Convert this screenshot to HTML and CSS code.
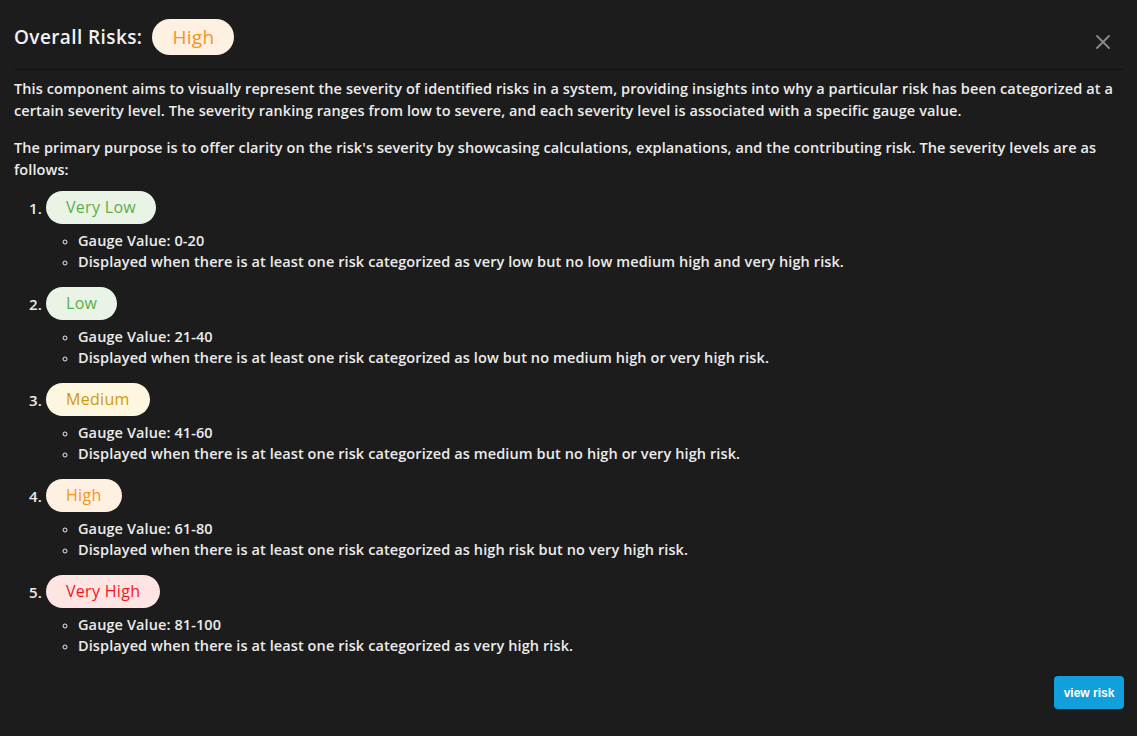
FILE: index.html
```html
<!DOCTYPE html>
<html lang="en">
<head>
<meta charset="utf-8">
<title>Overall Risks</title>
<link rel="stylesheet" href="styles.css">
</head>
<body>
<div class="modal">
  <header class="modal-header">
    <h2 class="title">Overall Risks:</h2>
    <span class="pill pill-lg high">High</span>
    <button class="close" aria-label="Close">
      <svg width="14" height="14" viewBox="0 0 14 14"><path d="M1 1L13 13M13 1L1 13" stroke="#8a8a8a" stroke-width="1.8" stroke-linecap="round"/></svg>
    </button>
  </header>
  <div class="modal-body">
    <p>This component aims to visually represent the severity of identified risks in a system, providing insights into why a particular risk has been categorized at a certain severity level. The severity ranking ranges from low to severe, and each severity level is associated with a specific gauge value.</p>
    <p>The primary purpose is to offer clarity on the risk's severity by showcasing calculations, explanations, and the contributing risk. The severity levels are as follows:</p>
    <ol class="levels">
      <li class="level">
        <div class="level-head"><span class="num">1.</span><span class="pill very-low">Very Low</span></div>
        <ul class="details">
          <li>Gauge Value: 0-20</li>
          <li>Displayed when there is at least one risk categorized as very low but no low medium high and very high risk.</li>
        </ul>
      </li>
      <li class="level">
        <div class="level-head"><span class="num">2.</span><span class="pill low">Low</span></div>
        <ul class="details">
          <li>Gauge Value: 21-40</li>
          <li>Displayed when there is at least one risk categorized as low but no medium high or very high risk.</li>
        </ul>
      </li>
      <li class="level">
        <div class="level-head"><span class="num">3.</span><span class="pill medium">Medium</span></div>
        <ul class="details">
          <li>Gauge Value: 41-60</li>
          <li>Displayed when there is at least one risk categorized as medium but no high or very high risk.</li>
        </ul>
      </li>
      <li class="level">
        <div class="level-head"><span class="num">4.</span><span class="pill high">High</span></div>
        <ul class="details">
          <li>Gauge Value: 61-80</li>
          <li>Displayed when there is at least one risk categorized as high risk but no very high risk.</li>
        </ul>
      </li>
      <li class="level">
        <div class="level-head"><span class="num">5.</span><span class="pill very-high">Very High</span></div>
        <ul class="details">
          <li>Gauge Value: 81-100</li>
          <li>Displayed when there is at least one risk categorized as very high risk.</li>
        </ul>
      </li>
    </ol>
    <div class="actions">
      <button class="btn-primary">view risk</button>
    </div>
  </div>
</div>
</body>
</html>
```

FILE: styles.css
```css
* { box-sizing: border-box; }
html, body {
  margin: 0;
  padding: 0;
  background: #1c1c1c;
}
body {
  font-family: "Open Sans", "Liberation Sans", sans-serif;
  color: #ececec;
  width: 1137px;
  height: 736px;
  overflow: hidden;
}
.modal {
  display: flex;
  flex-direction: column;
  height: 736px;
}
.modal-header {
  display: flex;
  align-items: center;
  margin: 0 14px;
  padding: 19px 0 14px;
  border-bottom: 1px solid #111111;
}
.title {
  margin: 0 10px 0 0;
  font-size: 19px;
  font-weight: 600;
  letter-spacing: 0.4px;
  color: #f2f2f2;
}
.close {
  margin-left: auto;
  margin-right: 13px;
  margin-top: 9px;
  background: none;
  border: 0;
  padding: 0;
  width: 14px;
  height: 14px;
  display: flex;
  cursor: pointer;
}
.modal-body {
  flex: 1;
  display: flex;
  flex-direction: column;
  padding: 8px 13px 27px 14px;
  font-size: 14.5px;
  font-weight: 600;
  letter-spacing: 0.1px;
  line-height: 22px;
}
.modal-body p {
  margin: 0 0 15px;
}
.levels {
  list-style: none;
  margin: -5px 0 0;
  padding: 0;
  display: flex;
  flex-direction: column;
  gap: 15px;
}
.level-head {
  display: flex;
  align-items: center;
  gap: 4px;
}
.num {
  width: 28px;
  text-align: right;
  font-size: 15px;
}
.pill {
  display: inline-block;
  padding: 6px 20px;
  border-radius: 999px;
  font-size: 16px;
  font-weight: 400;
  letter-spacing: 0.3px;
  line-height: 21px;
}
.pill-lg {
  padding: 6px 20px;
  font-size: 19px;
  line-height: 24px;
}
.very-low, .low { background: #eaf4e6; color: #5aae4c; }
.medium { background: #fdf7df; color: #d09a0a; }
.high { background: #fef1e2; color: #f7931e; }
.very-high { background: #ffe4e4; color: #f5151b; }
.details {
  margin: 6px 0 0;
  padding-left: 64px;
  list-style: circle;
  line-height: 21px;
}
.details li::marker { font-size: 12px; }
.actions {
  margin-top: auto;
  display: flex;
  justify-content: flex-end;
}
.btn-primary {
  background: #12a0dc;
  color: #ffffff;
  border: 0;
  border-radius: 4px;
  height: 33px;
  width: 70px;
  font-family: "Liberation Sans", Arial, sans-serif;
  font-weight: 700;
  font-size: 12px;
  letter-spacing: 0;
  cursor: pointer;
}
```
